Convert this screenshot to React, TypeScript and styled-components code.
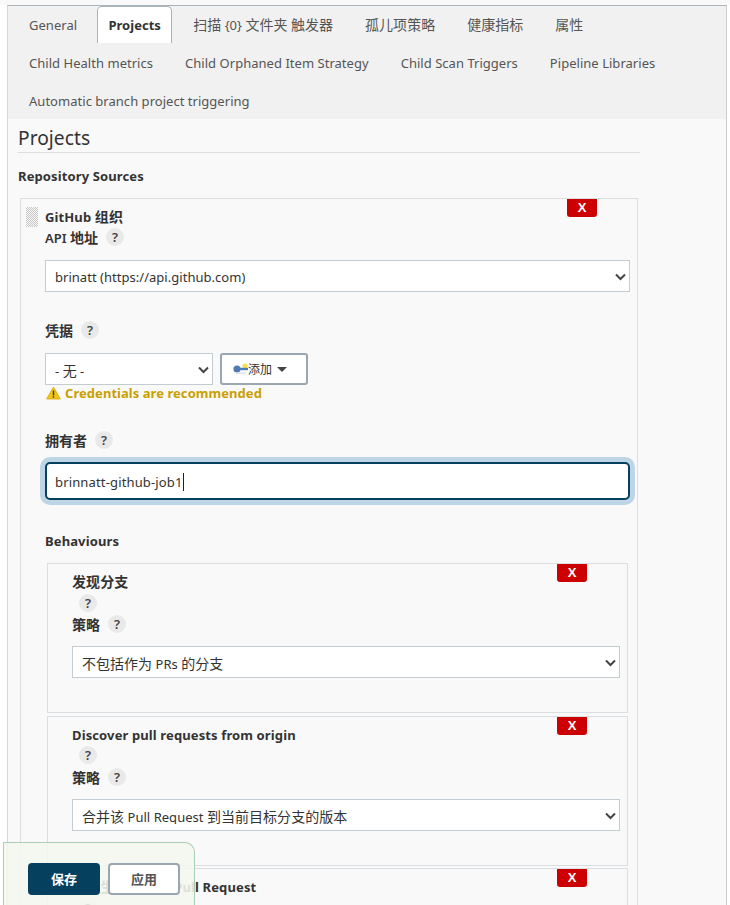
import React from 'react';
import styled, { createGlobalStyle } from 'styled-components';

const GlobalStyle = createGlobalStyle`
  html, body {
    margin: 0;
    padding: 0;
    background: #fff;
  }
  body {
    font-family: "Noto Sans", "Noto Sans CJK SC", sans-serif;
    font-size: 13px;
    letter-spacing: 0.03px;
    color: #333;
  }
`;

const Page = styled.div`
  position: relative;
  width: 730px;
  height: 905px;
  overflow: hidden;
  padding-top: 5px;
  box-sizing: border-box;
  background: linear-gradient(#f9f9f9 5px, #fff 5px);
`;

const Panel = styled.div`
  margin-left: 7px;
  width: 720px;
  height: 900px;
  box-sizing: border-box;
  border: 1px solid #d5d8da;
  border-top-color: #a9b3bc;
  border-right-color: #c9cdd0;
  border-bottom: 0;
  background: #f9f9f9;
`;

const TabBar = styled.div`
  display: flex;
  flex-wrap: wrap;
  align-content: flex-start;
  column-gap: 10px;
  height: 113px;
  padding-left: 10px;
  background: #f1f1f1;
`;

const Tab = styled.div<{ $active?: boolean }>`
  height: 38px;
  line-height: 38px;
  padding: 0 11px;
  box-sizing: border-box;
  white-space: nowrap;
  color: #555;
  ${(p) =>
    p.$active &&
    `
    height: 37px;
    line-height: 36px;
    margin-left: -1px;
    padding: 0 10.25px;
    font-weight: 700;
    color: #333;
    background: #fff;
    border: 1px solid #a9b3bc;
    border-bottom: 0;
    border-radius: 5px 5px 0 0;
  `}
`;

const Body = styled.div`
  padding-left: 10px;
`;

const Heading = styled.h2`
  width: 622px;
  margin: 0;
  height: 33px;
  line-height: 38px;
  font-size: 19.2px;
  font-weight: 400;
  color: #333;
  border-bottom: 1px solid #dcdfe1;
`;

const SectionTitle = styled.div`
  margin-top: 14px;
  height: 18px;
  line-height: 18px;
  font-weight: 700;
  letter-spacing: 0.12px;
`;

const Card = styled.div`
  position: relative;
  width: 618px;
  height: 800px;
  margin: 13px 0 0 2px;
  padding: 8px 7px 0 24px;
  box-sizing: border-box;
  border: 1px solid #dcdfe1;
  border-bottom: 0;
`;

const Handle = styled.div`
  position: absolute;
  left: 5px;
  top: 8px;
  width: 12px;
  height: 20px;
  background: repeating-conic-gradient(#c6c6c6 0 25%, transparent 0 50%) 0 0 / 2px 2px;
`;

const RemoveButton = styled.div`
  position: absolute;
  top: 0;
  right: 40px;
  width: 30px;
  height: 18px;
  line-height: 18px;
  text-align: center;
  background: #cc0000;
  color: #fff;
  font-family: "Liberation Sans", sans-serif;
  font-size: 13px;
  font-weight: 700;
  border-radius: 0 0 3px 3px;
`;

const BoldLabel = styled.div<{ $top?: number }>`
  height: 20px;
  line-height: 20px;
  margin-top: ${(p) => p.$top ?? 0}px;
  font-weight: 700;
  letter-spacing: 0.12px;
`;

const LabelRow = styled.div<{ $top?: number }>`
  display: flex;
  align-items: center;
  gap: 8px;
  height: 22px;
  margin-top: ${(p) => p.$top ?? 0}px;
  font-weight: 600;
`;

const Help = styled.span<{ $indent?: number }>`
  display: inline-block;
  width: 18px;
  height: 18px;
  margin-left: ${(p) => p.$indent ?? 0}px;
  line-height: 18px;
  text-align: center;
  border-radius: 50%;
  background: #e9e9e9;
  color: #444;
  font-size: 13px;
  font-weight: 600;
`;

const HelpRow = styled.div`
  display: flex;
  align-items: center;
  height: 21px;
`;

const SelectBox = styled.div<{ $width: number; $top?: number }>`
  display: flex;
  align-items: flex-start;
  justify-content: space-between;
  width: ${(p) => p.$width}px;
  height: 32px;
  margin-top: ${(p) => p.$top ?? 0}px;
  box-sizing: border-box;
  padding-left: 9px;
  background: #fff;
  border: 1px solid #c3ccd1;
  svg {
    flex: none;
    margin: 12px 3px 0 0;
  }
`;

const SelectValue = styled.span`
  display: block;
  height: 20px;
  margin-top: 4px;
  line-height: 25px;
  overflow: hidden;
  white-space: nowrap;
`;

const CredRow = styled.div`
  display: flex;
  gap: 7px;
  margin-top: 12px;
`;

const AddButton = styled.div`
  display: flex;
  align-items: center;
  width: 88px;
  height: 32px;
  box-sizing: border-box;
  padding-left: 11px;
  background: #fff;
  border: 2px solid #9aa6b0;
  border-radius: 3px;
  font-size: 12px;
`;

const Caret = styled.span`
  width: 0;
  height: 0;
  margin-left: 5px;
  border-left: 5px solid transparent;
  border-right: 5px solid transparent;
  border-top: 5px solid #444;
`;

const Warning = styled.div`
  display: flex;
  align-items: center;
  gap: 4px;
  height: 18px;
  margin-top: -1px;
  padding-left: 1px;
  font-weight: 700;
  letter-spacing: 0.05px;
  color: #c9a000;
`;

const OwnerInput = styled.div`
  width: 585px;
  height: 38px;
  margin-top: 11px;
  box-sizing: border-box;
  padding-left: 8px;
  line-height: 37px;
  letter-spacing: 0.15px;
  background: #fff;
  border: 2px solid #05405f;
  border-radius: 5px;
  box-shadow: 0 0 0 5px #bdd5e4;
`;

const TextCursor = styled.span`
  display: inline-block;
  width: 1px;
  height: 18px;
  vertical-align: -4px;
  background: #222;
`;

const BehaviourList = styled.div`
  display: flex;
  flex-direction: column;
  gap: 2.5px;
  margin: 12px 0 0 2px;
`;

const Behaviour = styled.div`
  position: relative;
  width: 581px;
  height: 150px;
  flex: none;
  padding: 8px 0 0 24px;
  box-sizing: border-box;
  border: 1px solid #dcdfe1;
`;

const SaveBar = styled.div`
  position: absolute;
  left: 3px;
  bottom: 0;
  display: flex;
  gap: 8px;
  width: 192px;
  height: 63px;
  padding: 20px 0 0 24px;
  box-sizing: border-box;
  background: rgba(244, 247, 238, 0.88);
  border: 1px solid #a9cfb6;
  border-bottom: 0;
  border-radius: 0 10px 0 0;
`;

const SaveButton = styled.div`
  width: 72px;
  height: 32px;
  line-height: 32px;
  text-align: center;
  background: #05405f;
  color: #fff;
  font-weight: 700;
  border-radius: 4px;
`;

const ApplyButton = styled.div`
  width: 72px;
  height: 32px;
  box-sizing: border-box;
  line-height: 28px;
  text-align: center;
  background: #fff;
  color: #555;
  font-weight: 600;
  border: 2px solid #9aa6b0;
  border-radius: 4px;
`;

const Cjk = styled.span`
  font-size: 14px;
`;

// Chinese runs sit a pixel larger than the Latin text around them
const Mixed = ({ text }: { text: string }) => (
  <span>
    {text.split(/([\u4e00-\u9fff]+)/).map((part, i) =>
      i % 2 ? <Cjk key={i}>{part}</Cjk> : part,
    )}
  </span>
);

const Chevron = () => (
  <svg width="11" height="8" viewBox="0 0 11 8">
    <path d="M1 1.5 5.5 6 10 1.5" fill="none" stroke="#444" strokeWidth="2" />
  </svg>
);

const KeyIcon = () => (
  <svg width="15" height="12" viewBox="0 0 15 12">
    <circle cx="12" cy="3" r="2.6" fill="#f3e24d" />
    <circle cx="4" cy="6" r="3.6" fill="#4f7cb3" />
    <rect x="6" y="4.8" width="9" height="2.4" fill="#4f7cb3" />
    <rect x="3" y="9.6" width="10" height="1.2" fill="#d5dde6" />
  </svg>
);

const WarnIcon = () => (
  <svg width="15" height="14" viewBox="0 0 15 14">
    <path d="M7.5 1 14.4 13H.6Z" fill="#f0c419" stroke="#d9a900" strokeWidth="0.8" strokeLinejoin="round" />
    <rect x="6.8" y="4.6" width="1.4" height="4.8" fill="#333" />
    <rect x="6.8" y="10.2" width="1.4" height="1.5" fill="#333" />
  </svg>
);

const Select = ({ value, width, top }: { value: string; width: number; top?: number }) => (
  <SelectBox $width={width} $top={top}>
    <SelectValue>
      <Mixed text={value} />
    </SelectValue>
    <Chevron />
  </SelectBox>
);

const Label = ({ text, top }: { text: string; top?: number }) => (
  <LabelRow $top={top}>
    <Mixed text={text} />
    <Help>?</Help>
  </LabelRow>
);

const tabs = [
  '扫描 {0} 文件夹 触发器',
  '孤儿项策略',
  '健康指标',
  '属性',
  'Child Health metrics',
  'Child Orphaned Item Strategy',
  'Child Scan Triggers',
  'Pipeline Libraries',
  'Automatic branch project triggering',
];

const behaviours = [
  { title: '发现分支', value: '不包括作为 PRs 的分支' },
  { title: 'Discover pull requests from origin', value: '合并该 Pull Request 到当前目标分支的版本' },
  { title: '从派生库中发现 Pull Request' },
];

export default function App() {
  return (
    <Page>
      <GlobalStyle />
      <Panel>
        <TabBar>
          <Tab>General</Tab>
          <Tab $active>Projects</Tab>
          {tabs.map((t) => (
            <Tab key={t}>
              <Mixed text={t} />
            </Tab>
          ))}
        </TabBar>
        <Body>
          <Heading>Projects</Heading>
          <SectionTitle>Repository Sources</SectionTitle>
          <Card>
            <Handle />
            <RemoveButton>X</RemoveButton>
            <BoldLabel>
              <Mixed text="GitHub 组织" />
            </BoldLabel>
            <Label text="API 地址" top={-1} />
            <Select value="brinatt (https://api.github.com)" width={585} top={12} />
            <Label text="凭据" top={27} />
            <CredRow>
              <Select value="- 无 -" width={168} />
              <AddButton>
                <KeyIcon />
                添加
                <Caret />
              </AddButton>
            </CredRow>
            <Warning>
              <WarnIcon />
              Credentials are recommended
            </Warning>
            <Label text="拥有者" top={27} />
            <OwnerInput>
              brinnatt-github-job1
              <TextCursor />
            </OwnerInput>
            <BoldLabel $top={31}>Behaviours</BoldLabel>
            <BehaviourList>
              {behaviours.map((b) => (
                <Behaviour key={b.title}>
                  <RemoveButton>X</RemoveButton>
                  <BoldLabel>
                    <Mixed text={b.title} />
                  </BoldLabel>
                  <HelpRow>
                    <Help $indent={7}>?</Help>
                  </HelpRow>
                  {b.value && (
                    <>
                      <Label text="策略" />
                      <Select value={b.value} width={548} top={11} />
                    </>
                  )}
                </Behaviour>
              ))}
            </BehaviourList>
          </Card>
        </Body>
      </Panel>
      <SaveBar>
        <SaveButton>保存</SaveButton>
        <ApplyButton>应用</ApplyButton>
      </SaveBar>
    </Page>
  );
}
